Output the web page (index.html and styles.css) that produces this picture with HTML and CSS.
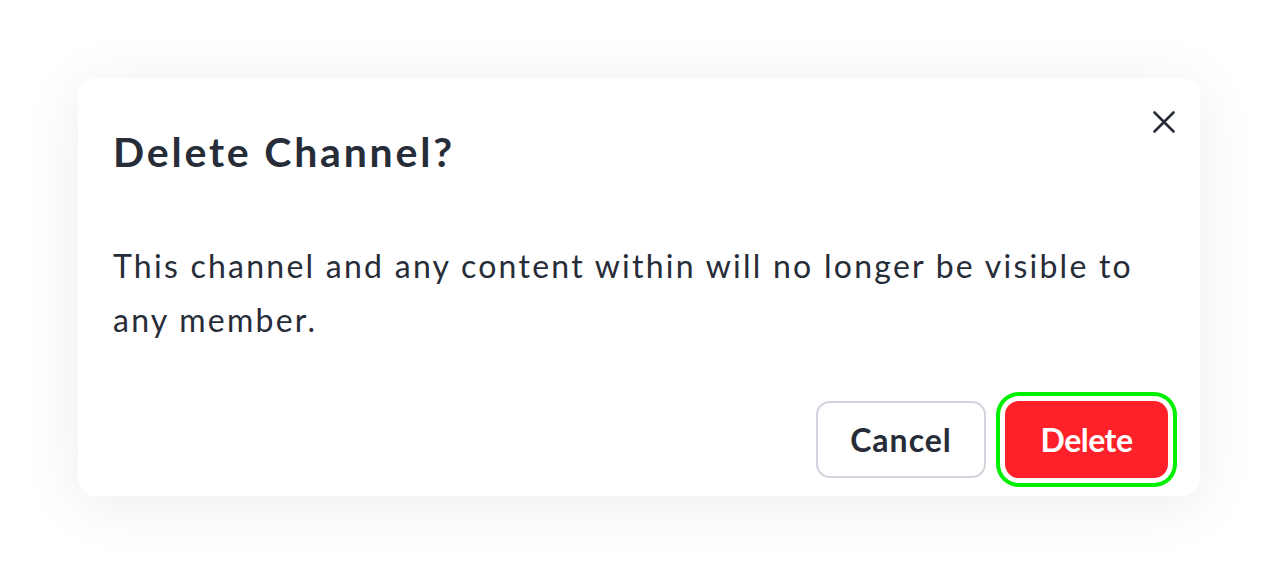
FILE: index.html
```html
<!DOCTYPE html>
<html lang="en">
<head>
    <meta charset="UTF-8">
    <meta name="viewport" content="width=device-width, initial-scale=1.0">
    <title>Delete Channel</title>
    <link rel="stylesheet" href="styles.css">
</head>
<body>

<div class="modal">
    <button class="close" aria-label="Close">
        <svg width="22" height="22" viewBox="0 0 22 22">
            <path d="M1.5 1.5 L20.5 20.5 M20.5 1.5 L1.5 20.5" stroke="#272d38" stroke-width="2.6" stroke-linecap="round" fill="none"/>
        </svg>
    </button>
    <h1 class="title">Delete Channel?</h1>
    <p class="text">This channel and any content within will no longer be visible to any member.</p>
    <div class="actions">
        <button class="btn btn-cancel">Cancel</button>
        <button class="btn btn-delete">Delete</button>
    </div>
</div>

</body>
</html>
```

FILE: styles.css
```css
body {
    margin: 0;
    min-height: 100vh;
    display: flex;
    align-items: center;
    justify-content: center;
    background-color: #ffffff;
    font-family: Lato, "Noto Sans", sans-serif;
    color: #272d38;
}
.modal {
    position: relative;
    width: 1122px;
    box-sizing: border-box;
    padding: 49px 32px 18px 35px;
    background: #ffffff;
    border-radius: 18px;
    box-shadow: 0 8px 60px rgba(0, 0, 0, 0.08);
}
.close {
    position: absolute;
    top: 33px;
    right: 25px;
    padding: 0;
    border: none;
    background: none;
    cursor: pointer;
    line-height: 0;
}
.title {
    margin: 0;
    font-size: 41px;
    font-weight: 700;
    line-height: 1.2;
    letter-spacing: 2.8px;
}
.text {
    margin: 62px 0 54px;
    font-size: 32px;
    line-height: 54px;
    letter-spacing: 2.25px;
}
.actions {
    display: flex;
    justify-content: flex-end;
    gap: 19px;
}
.btn {
    height: 77px;
    box-sizing: border-box;
    border-radius: 14px;
    font-family: Lato, "Noto Sans", sans-serif;
    font-size: 32px;
    font-weight: 700;
    cursor: pointer;
}
.btn-cancel {
    width: 170px;
    background: #ffffff;
    border: 2px solid #d0d4dd;
    color: #272d38;
    letter-spacing: 1px;
}
.btn-delete {
    width: 163px;
    background: #ff2129;
    border: none;
    color: #ffffff;
    letter-spacing: -0.5px;
    box-shadow: 0 0 0 5px #ffffff, 0 0 0 9px #00f000;
}
```
